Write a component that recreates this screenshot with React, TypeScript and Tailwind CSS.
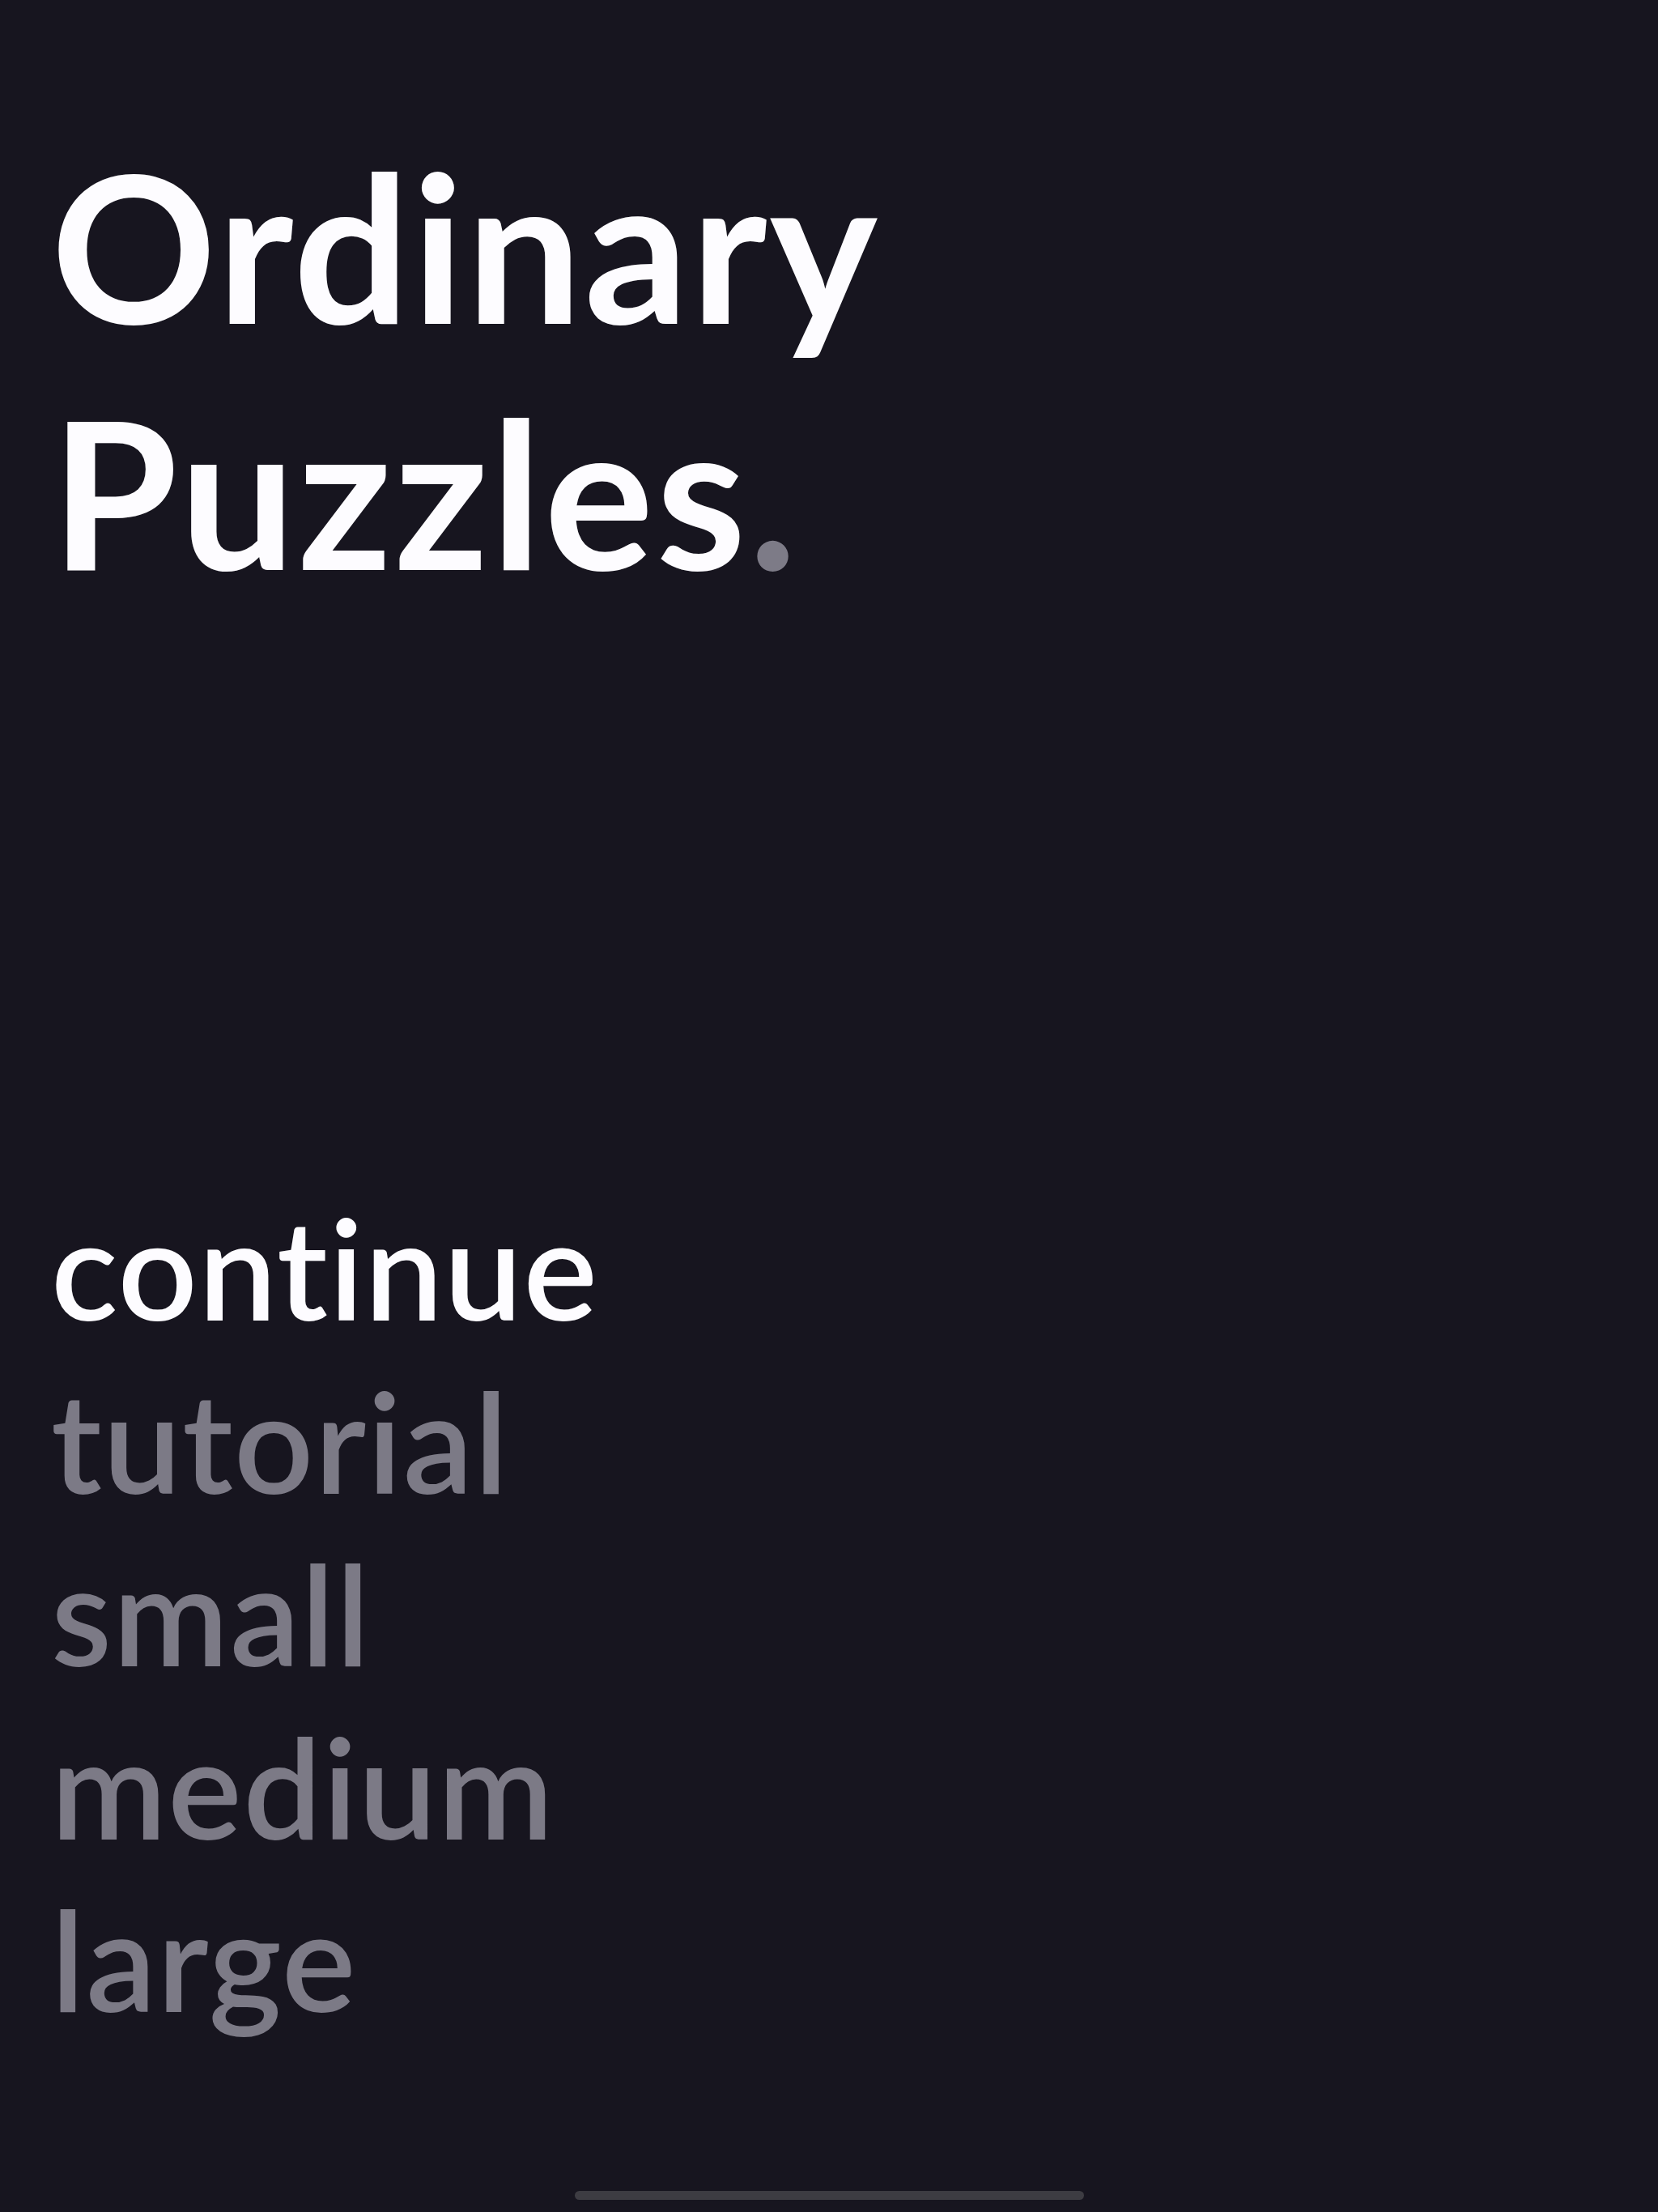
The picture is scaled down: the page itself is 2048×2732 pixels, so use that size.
export default function App() {
  const items = ["continue", "tutorial", "small", "medium", "large"];

  return (
    <div
      className="flex h-[2732px] w-[2048px] flex-col bg-[#17151f] pl-[63px] pt-[151px] [font-variant-ligatures:none]"
      style={{ fontFamily: "Lato, 'Noto Sans', sans-serif" }}
    >
      <h1 className="text-[253px] font-bold leading-[1.2] tracking-[3px] text-[#fdfcff]">
        Ordinary
        <br />
        Puzzles<span className="text-[#7d7b87]">.</span>
      </h1>

      <nav className="mt-[700px] flex flex-col">
        {items.map((item, i) => (
          <button
            key={item}
            className={
              i === 0
                ? "text-left text-[172px] font-semibold leading-[213.5px] tracking-[1.5px] text-[#fdfcff]"
                : "text-left text-[172px] font-semibold leading-[213.5px] tracking-[1.5px] text-[#7c7a86]"
            }
          >
            {item}
          </button>
        ))}
      </nav>

      <div className="-ml-[63px] mt-auto flex justify-center pb-[15px]">
        <div className="h-[11px] w-[629px] rounded-full bg-[#3d3c42]" />
      </div>
    </div>
  );
}
